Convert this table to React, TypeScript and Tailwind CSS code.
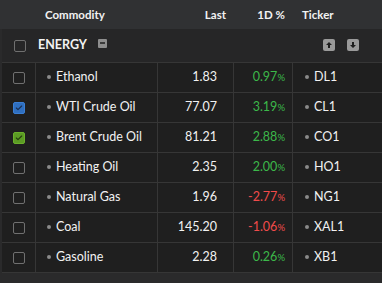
import { Check } from "lucide-react";

type Row = {
  name: string;
  last: string;
  change: string;
  ticker: string;
  checked?: "blue" | "green";
};

const rows: Row[] = [
  { name: "Ethanol", last: "1.83", change: "0.97", ticker: "DL1" },
  { name: "WTI Crude Oil", last: "77.07", change: "3.19", ticker: "CL1", checked: "blue" },
  { name: "Brent Crude Oil", last: "81.21", change: "2.88", ticker: "CO1", checked: "green" },
  { name: "Heating Oil", last: "2.35", change: "2.00", ticker: "HO1" },
  { name: "Natural Gas", last: "1.96", change: "-2.77", ticker: "NG1" },
  { name: "Coal", last: "145.20", change: "-1.06", ticker: "XAL1" },
  { name: "Gasoline", last: "2.28", change: "0.26", ticker: "XB1" },
];

const Box = ({ checked }: { checked?: "blue" | "green" }) => {
  if (checked === "blue")
    return (
      <div className="w-[12px] h-[12px] rounded-[2px] bg-[#2f6fc0] border border-[#3b7fd4] flex items-center justify-center">
        <Check size={8} strokeWidth={3.5} className="text-[#1b2f4f]" />
      </div>
    );
  if (checked === "green")
    return (
      <div className="w-[12px] h-[12px] rounded-[2px] bg-[#5c9c24] border border-[#6bb02c] flex items-center justify-center">
        <Check size={8} strokeWidth={3.5} className="text-[#253d10]" />
      </div>
    );
  return <div className="w-[12px] h-[12px] rounded-[2px] border-[1.5px] border-[#707070]" />;
};

const Bullet = () => <span className="inline-block w-[4px] h-[4px] rounded-full bg-[#8a8a8a] mr-[5px] mb-[1px]" />;

export default function App() {
  return (
    <div
      className="w-[382px] h-[283px] bg-[#2a2a2b] text-[#f2f2f2] overflow-hidden"
      style={{ fontFamily: 'Lato, "Noto Sans", sans-serif' }}
    >
      <div className="grid grid-cols-[36px_122px_76px_59px_89px] h-[29px] bg-[#303133] items-center text-[11.5px] font-bold">
        <div />
        <div className="pl-[9px]">Commodity</div>
        <div className="text-right pr-[8px]">Last</div>
        <div className="text-right pr-[8px]">1D %</div>
        <div className="pl-[9px]">Ticker</div>
      </div>

      <div className="flex items-center h-[34px] bg-[#262627] border-b border-[#363636] ml-[2px]">
        <div className="w-[34px] flex justify-center pl-[1px]">
          <Box />
        </div>
        <span className="text-[12.5px] font-bold ml-[2px]">ENERGY</span>
        <div className="ml-[11px] mb-[5px] w-[9px] h-[9px] rounded-[1px] bg-[#8e8e8e] flex items-center justify-center">
          <div className="w-[5px] h-[2px] bg-[#3a3a3a]" />
        </div>
        <div className="ml-auto flex gap-[12px] pr-[23px] mb-[1px]">
          <div className="w-[12px] h-[12px] rounded-[2px] bg-[#9a9a9a] flex items-center justify-center">
            <svg width="8" height="8" viewBox="0 0 8 8">
              <path d="M4 1 L7 4 H5 V7 H3 V4 H1 Z" fill="#1e1e1e" />
            </svg>
          </div>
          <div className="w-[12px] h-[12px] rounded-[2px] bg-[#9a9a9a] flex items-center justify-center">
            <svg width="8" height="8" viewBox="0 0 8 8">
              <path d="M4 7 L7 4 H5 V1 H3 V4 H1 Z" fill="#1e1e1e" />
            </svg>
          </div>
        </div>
      </div>

      <div className="bg-[#1f1f1f] ml-[2px]">
        {rows.map((r) => {
          const neg = r.change.startsWith("-");
          return (
            <div
              key={r.name}
              className="grid grid-cols-[34px_122px_76px_59px_89px] h-[30px] items-stretch border-b border-[#363636] text-[12.5px]"
            >
              <div className="flex items-center justify-center pl-[1px] border-r border-[#363636]">
                <Box checked={r.checked} />
              </div>
              <div className="flex items-center pl-[11px] border-r border-[#363636]">
                <Bullet />
                {r.name}
              </div>
              <div className="flex items-center justify-end pr-[16px] border-r border-[#363636]">{r.last}</div>
              <div
                className={`flex items-center justify-end pr-[7px] border-r border-[#363636] ${
                  neg ? "text-[#f04b4b]" : "text-[#3cb84a]"
                }`}
              >
                {r.change}
                <span className="text-[9.5px] mt-[2px]">%</span>
              </div>
              <div className="flex items-center pl-[12px]">
                <Bullet />
                {r.ticker}
              </div>
            </div>
          );
        })}
      </div>
    </div>
  );
}
